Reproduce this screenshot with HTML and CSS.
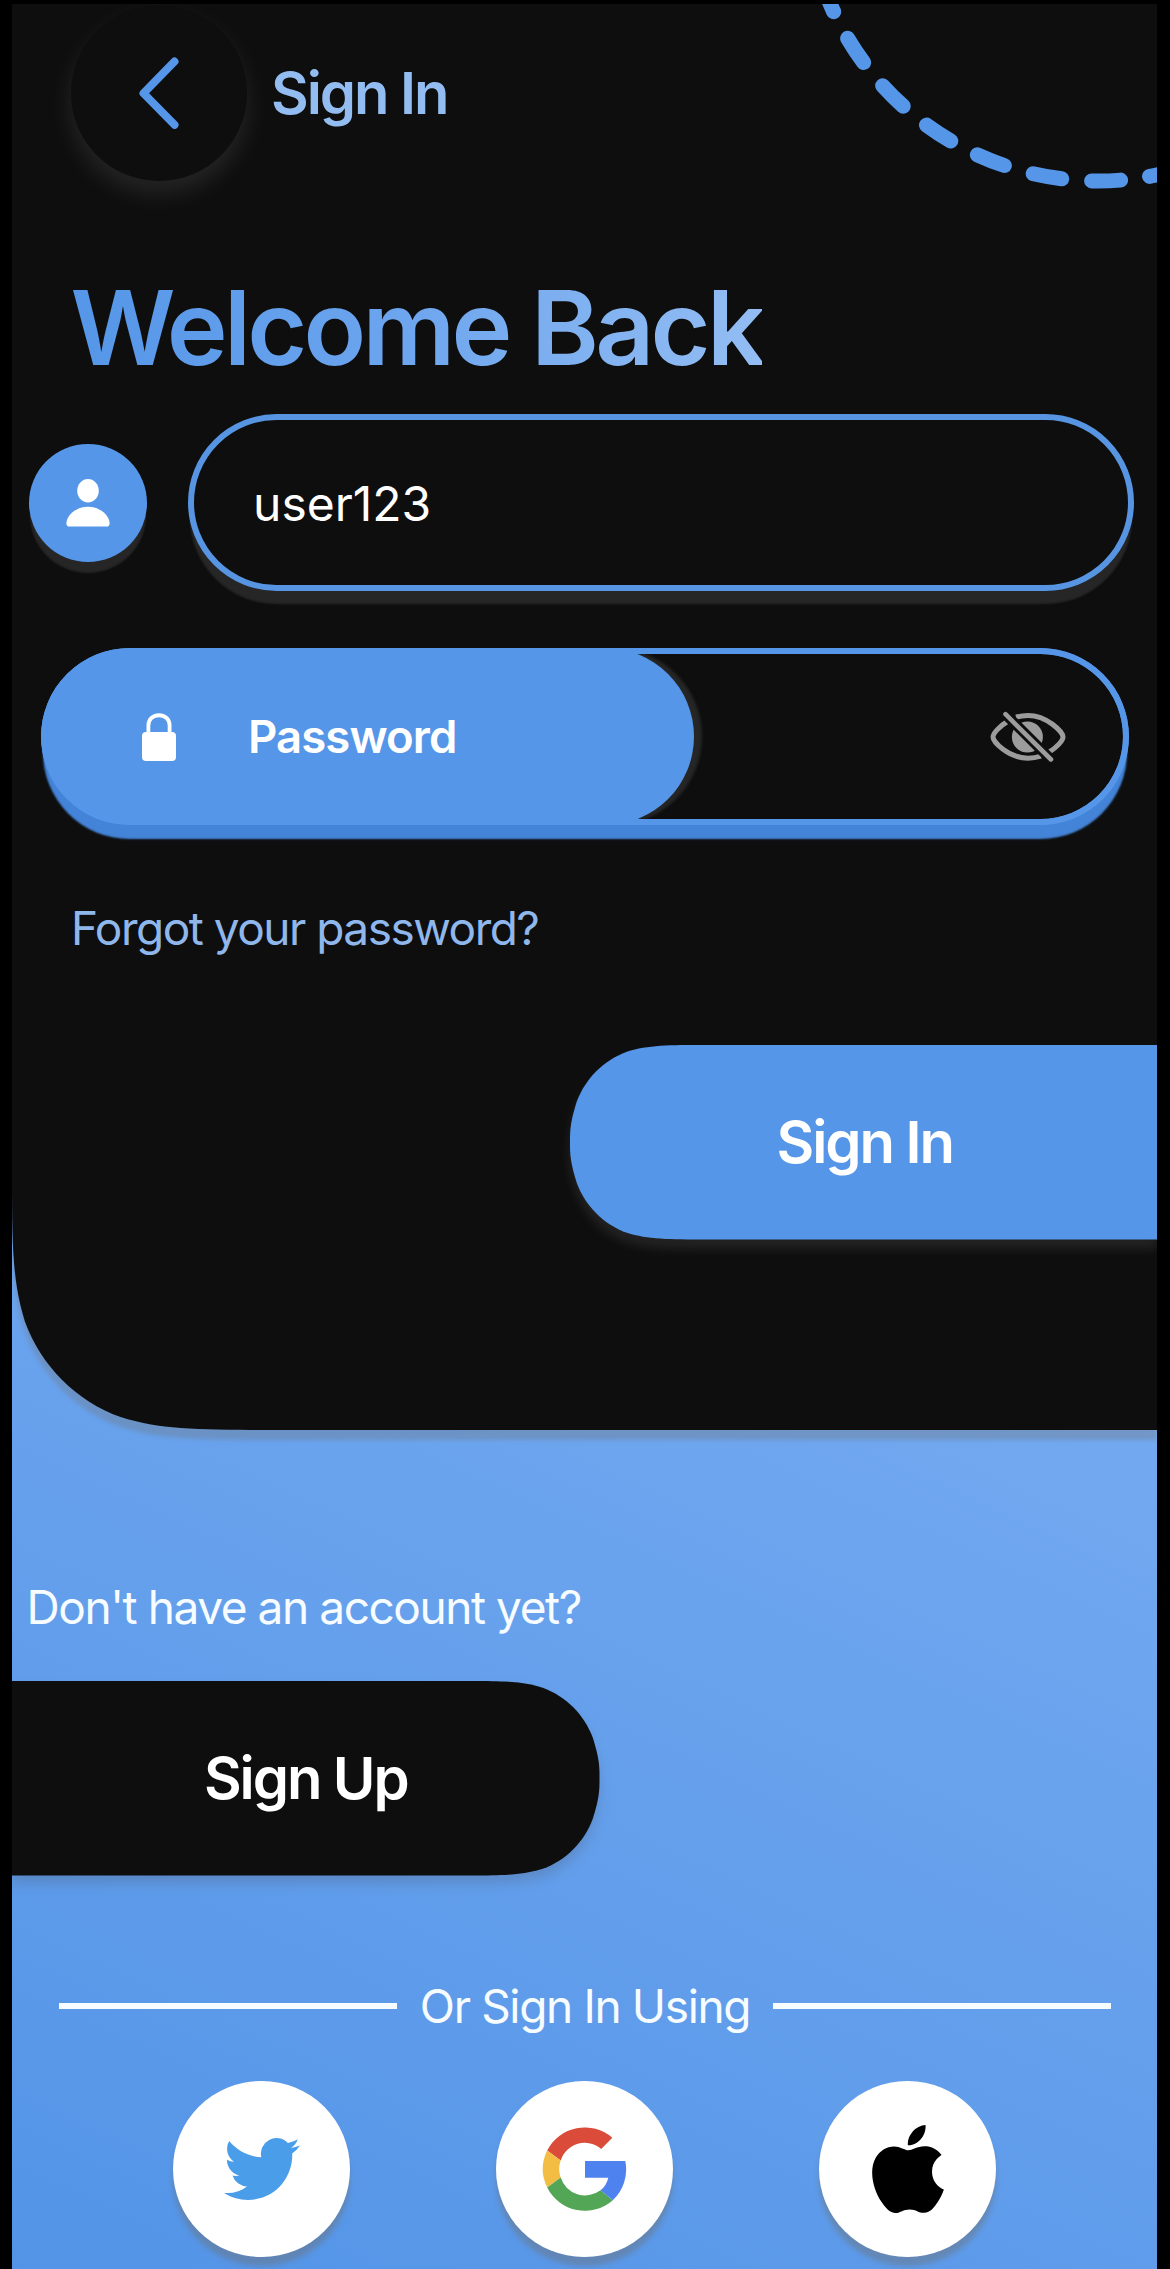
FILE: index.html
```html
<!DOCTYPE html>
<html lang="en">
<head>
<meta charset="utf-8">
<title>Sign In</title>
<link rel="stylesheet" href="styles.css">
</head>
<body>
<main class="screen">
  <section class="panel">
    <svg class="panel-shape" viewBox="0 0 1145 1426" aria-hidden="true">
      <path d="M0 0H1145V1426H262.9C187.2 1426 149.4 1426 108.6 1413.1C64.1 1396.9 29.1 1361.9 12.9 1317.4C0 1276.6 0 1238.8 0 1163.1Z"/>
    </svg>
    <svg class="ring" viewBox="0 0 600 600" aria-hidden="true">
      <circle cx="300" cy="300" r="291" transform="rotate(85.55 300 300)"/>
    </svg>

    <header class="header">
      <button class="back" aria-label="Back">
        <svg viewBox="0 0 40 72"><path d="M35.5 4.5L4.5 36.2L35.5 67.8"/></svg>
      </button>
      <span class="header-title">Sign In</span>
    </header>

    <h1 class="welcome"><span class="welcome-text">Welcome Back</span></h1>

    <form class="form">
      <div class="user-row">
        <span class="user-badge">
          <svg viewBox="0 0 44 48"><ellipse cx="22" cy="11.7" rx="10.8" ry="11.7"/><path d="M22 27.8C33.500 27.800 43.600 36 43.600 44.500Q43.600 47.600 40.500 47.600H3.500Q.4 47.600 .4 44.500C.4 36 10.500 27.800 22 27.800Z"/></svg>
        </span>
        <div class="user-field">user123</div>
      </div>

      <div class="pass-row">
        <div class="pass-label">
          <svg class="lock" viewBox="0 0 34 48"><rect x="0" y="19" width="34" height="29" rx="4"/><path d="M6.400 21V12.500C6.400 -1.200 27.600 -1.200 27.600 12.500V21"/></svg>
          <span class="pass-text">Password</span>
        </div>
        <svg class="eye" viewBox="0 0 76 50">
          <path class="lid" d="M17.500 9.500C9 14.500 3 21.500 3 25C3 29.500 18 46.200 38 46.200Q44.500 46.200 51 44.200"/>
          <path class="lid" d="M26 5.200Q32 3.500 38 3.500C57 3.500 73 20 73 25C73 28.500 67 35.500 58.500 40.500"/>
          <circle class="pupil" cx="37.400" cy="25" r="15.500"/>
          <path class="gap" d="M15.500 2.200L61 47.500"/>
          <path class="slash" d="M15.500 2.200L61 47.500"/>
        </svg>
      </div>

      <a class="forgot">Forgot your password?</a>

      <button class="cta sign-in" type="button">
        <svg class="cta-shape" viewBox="0 0 587.5 194.5" aria-hidden="true"><path d="M588 0H137.600C98 0 78.200 0 56.800 6.700C33.600 15.200 15.200 33.600 6.700 56.800C0 78.200 0 86 0 97.250C0 108.500 0 116.300 6.700 137.700C15.200 160.900 33.600 179.300 56.800 187.800C78.200 194.500 98 194.500 137.600 194.500H588Z"/></svg>
        <span class="cta-text">Sign In</span>
      </button>
    </form>
  </section>

  <section class="lower">
    <p class="question">Don't have an account yet?</p>
    <button class="cta sign-up" type="button">
      <svg class="cta-shape" viewBox="0 0 587.5 194.5" aria-hidden="true"><path d="M588 0H137.600C98 0 78.200 0 56.800 6.700C33.600 15.200 15.200 33.600 6.700 56.800C0 78.200 0 86 0 97.250C0 108.500 0 116.300 6.700 137.700C15.200 160.900 33.600 179.300 56.800 187.800C78.200 194.500 98 194.500 137.600 194.500H588Z"/></svg>
      <span class="cta-text">Sign Up</span>
    </button>

    <div class="divider">
      <span class="rule"></span>
      <span class="divider-text">Or Sign In Using</span>
      <span class="rule"></span>
    </div>

    <div class="socials">
      <button class="social" aria-label="Twitter">
        <svg class="twitter" viewBox="0 0 24 24"><path d="M23.953 4.570a10 10 0 01-2.825.775 4.958 4.958 0 002.163-2.723c-.951.555-2.005.959-3.127 1.184a4.920 4.920 0 00-8.384 4.482C7.690 8.095 4.067 6.130 1.640 3.162a4.822 4.822 0 00-.666 2.475c0 1.710.87 3.213 2.188 4.096a4.904 4.904 0 01-2.228-.616v.06a4.923 4.923 0 003.946 4.827 4.996 4.996 0 01-2.212.085 4.936 4.936 0 004.604 3.417 9.867 9.867 0 01-6.102 2.105c-.39 0-.779-.023-1.170-.067a13.995 13.995 0 007.557 2.209c9.053 0 13.998-7.496 13.998-13.985 0-.21 0-.42-.015-.63A9.935 9.935 0 0024 4.590z"/></svg>
      </button>
      <button class="social" aria-label="Google">
        <svg class="google" viewBox="-43 -43 86 86">
          <path fill="#da4b39" d="M27.300 -31.300A42 42 0 0 0 -37.800 -18.500L-24.300 -8.600A25.200 25.200 0 0 1 16.200 -20Z"/>
          <path fill="#f2bd42" d="M-37.800 -18.500A42 42 0 0 0 -37.800 18.500L-24.300 8.600A25.200 25.200 0 0 1 -24.300 -8.600Z"/>
          <path fill="#53a656" d="M-37.800 18.500A42 42 0 0 0 27.800 31.200L15.500 21.300A25.600 25.600 0 0 1 -24.300 8.600Z"/>
          <path fill="#4e82ee" d="M0 -8H40.300A42 42 0 0 1 27.800 31.200L15.500 21.300A22.500 22.500 0 0 0 23.300 8.700H0Z"/>
        </svg>
      </button>
      <button class="social" aria-label="Apple">
        <svg class="apple" viewBox="0 0 24 24"><path d="M12.152 6.896c-.948 0-2.415-1.078-3.960-1.040-2.040.027-3.910 1.183-4.961 3.014-2.117 3.675-.546 9.103 1.519 12.090 1.013 1.454 2.208 3.090 3.792 3.039 1.520-.065 2.090-.987 3.935-.987 1.831 0 2.350.987 3.960.948 1.637-.026 2.676-1.480 3.676-2.948 1.156-1.688 1.636-3.325 1.662-3.415-.039-.013-3.182-1.221-3.220-4.857-.026-3.040 2.480-4.494 2.597-4.559-1.429-2.090-3.623-2.324-4.390-2.376-2-.156-3.675 1.090-4.610 1.090zM15.530 3.830c.843-1.012 1.400-2.427 1.245-3.830-1.207.052-2.662.805-3.532 1.818-.78.896-1.454 2.338-1.273 3.714 1.338.104 2.715-.688 3.559-1.701"/></svg>
      </button>
    </div>
  </section>
</main>
</body>
</html>
```
FILE: styles.css
```css
:root {
  --blue: #5596e8;
  --ink: #0e0e0e;
  --shadow: #262626;
}

* {
  box-sizing: border-box;
}

body {
  margin: 0;
  padding: 4px 13px 0 12px;
  height: 2269px;
  background: #000;
  overflow: hidden;
  color: #fff;
  font-family: Inter, "Liberation Sans", sans-serif;
}

button {
  padding: 0;
  border: 0;
  background: none;
  color: inherit;
  font: inherit;
}

svg {
  display: block;
}

.screen {
  height: 2265px;
  overflow: hidden;
  background: linear-gradient(25deg, #5394e7 0, #73a9f0 1245px);
}

.panel {
  position: relative;
  height: 1426px;
  padding-top: 1px;
}

.panel-shape {
  position: absolute;
  top: 0;
  left: 0;
  width: 1145px;
  height: 1426px;
  overflow: visible;
  fill: var(--ink);
  filter: drop-shadow(0 10px 2px rgba(112, 112, 112, .32));
}

.ring {
  position: absolute;
  top: -414px;
  left: 785.5px;
  width: 600px;
  height: 600px;
  fill: none;
  stroke: var(--blue);
  stroke-width: 15;
  stroke-linecap: round;
  stroke-dasharray: 29 29.98;
}

.header {
  position: relative;
  display: flex;
  align-items: center;
  gap: 24px;
  padding-left: 59px;
}

.back {
  display: flex;
  align-items: center;
  width: 176px;
  height: 176px;
  padding-left: 68px;
  border-radius: 50%;
  background: var(--ink);
  box-shadow: 0 12px 26px rgba(255, 255, 255, .1);
}

.back svg {
  width: 40px;
  height: 72px;
  fill: none;
  stroke: var(--blue);
  stroke-width: 8;
  stroke-linecap: round;
  stroke-linejoin: round;
}

.header-title {
  color: #93bcf1;
  font-size: 58px;
  font-weight: 600;
  line-height: 70px;
  letter-spacing: -2.06px;
}

.welcome {
  position: relative;
  margin: 84px 0 0 58.5px;
  font-size: 103px;
  font-weight: 600;
  line-height: 125px;
  letter-spacing: -3.7px;
}

.welcome-text {
  background: linear-gradient(90deg, #5596e8, #6ba4ee 45%, #93bdf3);
  background-clip: text;
  -webkit-background-clip: text;
  color: transparent;
}

.form {
  position: relative;
  display: flex;
  flex-direction: column;
}

.user-row {
  display: flex;
  align-items: center;
  gap: 41px;
  margin: 24px 23px 0 17px;
}

.user-badge {
  display: flex;
  align-items: center;
  justify-content: center;
  width: 118px;
  height: 118px;
  border-radius: 50%;
  background: var(--blue);
  box-shadow: 0 12px 2px -1px var(--shadow);
}

.user-badge svg {
  width: 44px;
  height: 48px;
  fill: #fff;
}

.user-field {
  flex: 1;
  height: 177px;
  padding: 1px 0 0 59px;
  border: 6px solid #5795e3;
  border-radius: 89px;
  background: var(--ink);
  box-shadow: 0 15px 2px -2px var(--shadow);
  font-size: 48px;
  line-height: 165px;
  letter-spacing: 0;
}

.pass-row {
  position: relative;
  display: flex;
  align-items: center;
  justify-content: space-between;
  width: 1088px;
  height: 177px;
  margin: 57px 0 0 29px;
  padding-right: 63px;
  border-radius: 89px;
  background: var(--blue);
  box-shadow: 0 16px 2px -2px #4484d8;
  overflow: hidden;
}

/* dark input well, inset by the width of the blue rim */
.pass-row::before {
  content: "";
  position: absolute;
  inset: 6px;
  border-radius: 83px;
  background: var(--ink);
}

/* rim drawn over the label's side shadow */
.pass-row::after {
  content: "";
  position: absolute;
  inset: 0;
  border: 6px solid var(--blue);
  border-radius: inherit;
}

.pass-label {
  position: relative;
  display: flex;
  align-items: center;
  gap: 72px;
  width: 653px;
  height: 177px;
  padding-left: 101px;
  border-radius: 89px;
  background: var(--blue);
  box-shadow: 8px 0 3px var(--shadow);
}

.lock {
  width: 34px;
  height: 48px;
  fill: #fff;
}

.lock path {
  fill: none;
  stroke: #fff;
  stroke-width: 3.8;
}

.pass-text {
  font-size: 45.5px;
  font-weight: 600;
  line-height: 56px;
  letter-spacing: -.9px;
}

.eye {
  position: relative;
  width: 76px;
  height: 50px;
  overflow: visible;
  fill: none;
  stroke-linecap: round;
}

.lid {
  stroke: #9c9c9c;
  stroke-width: 5;
  stroke-linecap: butt;
}

.pupil {
  fill: #9c9c9c;
}

.gap {
  stroke: var(--ink);
  stroke-width: 10.5;
}

.slash {
  stroke: #9c9c9c;
  stroke-width: 4.6;
}

.forgot {
  margin: 75px 0 0 59px;
  color: #8fb7ec;
  font-size: 46px;
  line-height: 56px;
  letter-spacing: -1.5px;
}

.cta {
  position: relative;
  display: flex;
  align-items: center;
  justify-content: center;
  width: 587.5px;
  height: 194.5px;
}

.cta-shape {
  position: absolute;
  top: 0;
  left: 0;
  width: 587.5px;
  height: 194.5px;
  overflow: visible;
}

.cta-text {
  position: relative;
  font-size: 58px;
  font-weight: 600;
  line-height: 70px;
  letter-spacing: -2.07px;
}

.sign-in {
  align-self: flex-end;
  margin-top: 89px;
}

.sign-in .cta-shape {
  fill: var(--blue);
  filter: drop-shadow(0 9px 6px rgba(255, 255, 255, .09));
}

.lower {
  position: relative;
  padding-top: 149px;
}

.question {
  margin: 0 0 0 14.5px;
  color: #f6fcff;
  font-size: 46px;
  line-height: 56px;
  letter-spacing: -1.43px;
}

.sign-up {
  margin-top: 46px;
}

.sign-up .cta-shape {
  fill: var(--ink);
  transform: scaleX(-1);
  filter: drop-shadow(0 8px 6px rgba(80, 90, 110, .28));
}

.sign-in .cta-text {
  padding-left: 3px;
}

.divider {
  display: flex;
  align-items: center;
  justify-content: space-between;
  margin: 102.5px 45.5px 0 46.5px;
}

.rule {
  width: 338.5px;
  height: 6px;
  background: #f6fcff;
}

.divider-text {
  color: #f6fcff;
  font-size: 46px;
  line-height: 56px;
  letter-spacing: -1.35px;
}

.socials {
  display: flex;
  justify-content: center;
  gap: 146.5px;
  margin-top: 46.5px;
}

.social {
  display: flex;
  align-items: center;
  justify-content: center;
  width: 176.5px;
  height: 176.5px;
  border-radius: 50%;
  background: #fff;
  box-shadow: 0 9px 5px rgba(110, 110, 110, .42);
}

.twitter {
  width: 76px;
  height: 76px;
  fill: #4a9de8;
}

.google {
  width: 86px;
  height: 86px;
}

.apple {
  width: 88px;
  height: 88px;
  fill: #000;
}
```
